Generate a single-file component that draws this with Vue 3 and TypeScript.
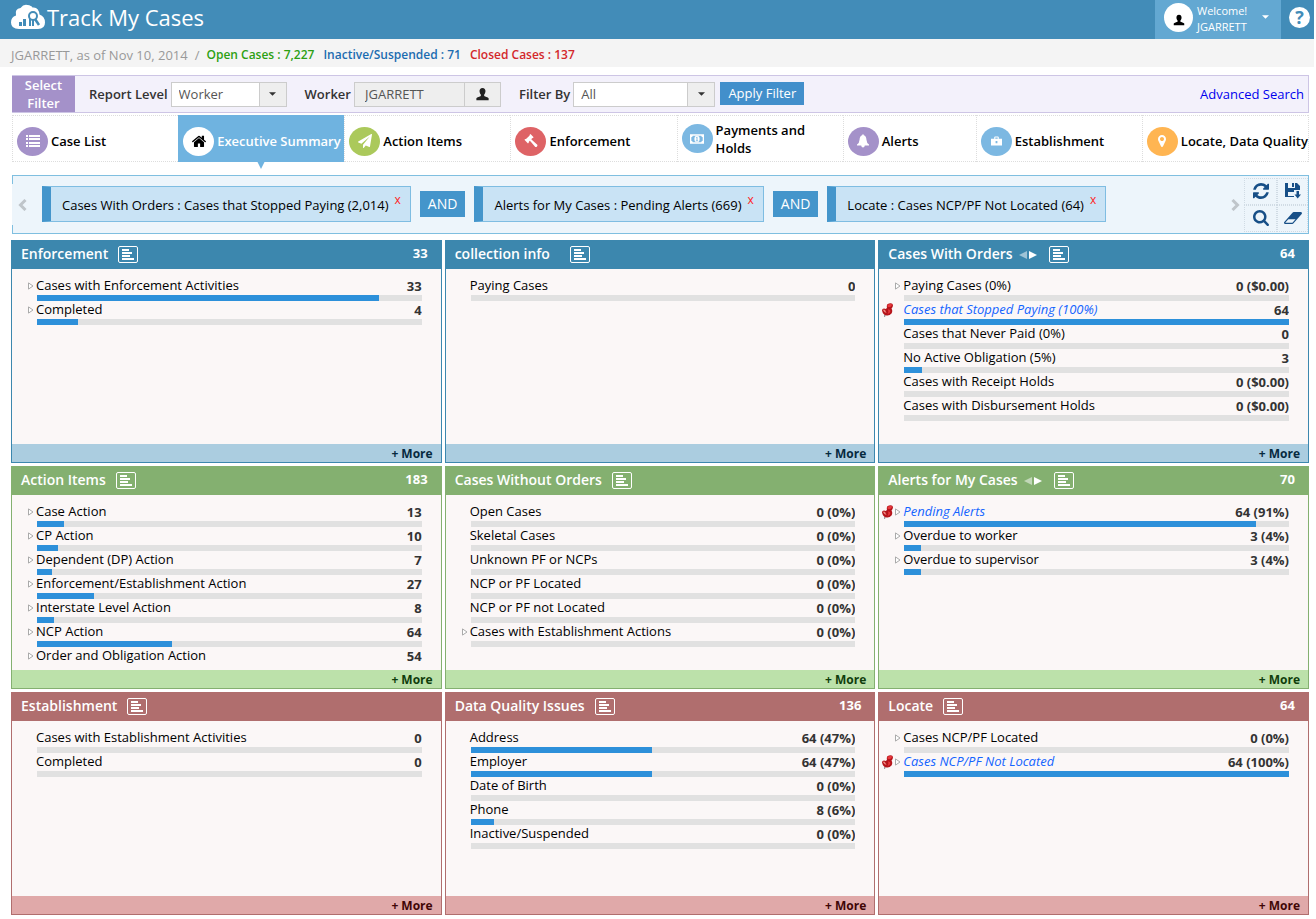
<script setup lang="ts">
import { ref } from 'vue'

type IconName =
  | 'list' | 'home' | 'plane' | 'gavel' | 'money' | 'bell' | 'case' | 'marker'

interface Tab { label: string; icon: IconName; tone: string; active?: boolean; wrap?: boolean }
interface Row {
  label: string
  value: string
  pct: number
  expand?: boolean
  pinned?: boolean
}
interface Panel {
  title: string
  tone: 'blue' | 'green' | 'red'
  total?: string
  pager?: boolean
  wide?: boolean
  rows: Row[]
}

const reportLevel = ref('Worker')
const worker = ref('JGARRETT')
const filterBy = ref('All')

const tabs: Tab[] = [
  { label: 'Case List', icon: 'list', tone: 'purple' },
  { label: 'Executive Summary', icon: 'home', tone: 'white', active: true },
  { label: 'Action Items', icon: 'plane', tone: 'lime' },
  { label: 'Enforcement', icon: 'gavel', tone: 'coral' },
  { label: 'Payments and Holds', icon: 'money', tone: 'sky', wrap: true },
  { label: 'Alerts', icon: 'bell', tone: 'purple' },
  { label: 'Establishment', icon: 'case', tone: 'sky' },
  { label: 'Locate, Data Quality', icon: 'marker', tone: 'amber' },
]

const chips = ref<string[]>([
  'Cases With Orders : Cases that Stopped Paying (2,014)',
  'Alerts for My Cases : Pending Alerts (669)',
  'Locate : Cases NCP/PF Not Located (64)',
])

const panels: Panel[] = [
  {
    title: 'Enforcement', tone: 'blue', total: '33',
    rows: [
      { label: 'Cases with Enforcement Activities', value: '33', pct: 89, expand: true },
      { label: 'Completed', value: '4', pct: 10.7, expand: true },
    ],
  },
  {
    title: 'collection info', tone: 'blue', wide: true,
    rows: [{ label: 'Paying Cases', value: '0', pct: 0 }],
  },
  {
    title: 'Cases With Orders', tone: 'blue', total: '64', pager: true,
    rows: [
      { label: 'Paying Cases (0%)', value: '0 ($0.00)', pct: 0, expand: true },
      { label: 'Cases that Stopped Paying (100%)', value: '64', pct: 100, pinned: true },
      { label: 'Cases that Never Paid (0%)', value: '0', pct: 0 },
      { label: 'No Active Obligation (5%)', value: '3', pct: 4.7 },
      { label: 'Cases with Receipt Holds', value: '0 ($0.00)', pct: 0 },
      { label: 'Cases with Disbursement Holds', value: '0 ($0.00)', pct: 0 },
    ],
  },
  {
    title: 'Action Items', tone: 'green', total: '183',
    rows: [
      { label: 'Case Action', value: '13', pct: 7, expand: true },
      { label: 'CP Action', value: '10', pct: 5.5, expand: true },
      { label: 'Dependent (DP) Action', value: '7', pct: 3.8, expand: true },
      { label: 'Enforcement/Establishment Action', value: '27', pct: 14.8, expand: true },
      { label: 'Interstate Level Action', value: '8', pct: 4.4, expand: true },
      { label: 'NCP Action', value: '64', pct: 35, expand: true },
      { label: 'Order and Obligation Action', value: '54', pct: 29.5, expand: true },
    ],
  },
  {
    title: 'Cases Without Orders', tone: 'green',
    rows: [
      { label: 'Open Cases', value: '0 (0%)', pct: 0 },
      { label: 'Skeletal Cases', value: '0 (0%)', pct: 0 },
      { label: 'Unknown PF or NCPs', value: '0 (0%)', pct: 0 },
      { label: 'NCP or PF Located', value: '0 (0%)', pct: 0 },
      { label: 'NCP or PF not Located', value: '0 (0%)', pct: 0 },
      { label: 'Cases with Establishment Actions', value: '0 (0%)', pct: 0, expand: true },
    ],
  },
  {
    title: 'Alerts for My Cases', tone: 'green', total: '70', pager: true,
    rows: [
      { label: 'Pending Alerts', value: '64 (91%)', pct: 91.4, expand: true, pinned: true },
      { label: 'Overdue to worker', value: '3 (4%)', pct: 4.4, expand: true },
      { label: 'Overdue to supervisor', value: '3 (4%)', pct: 4.4, expand: true },
    ],
  },
  {
    title: 'Establishment', tone: 'red',
    rows: [
      { label: 'Cases with Establishment Activities', value: '0', pct: 0 },
      { label: 'Completed', value: '0', pct: 0 },
    ],
  },
  {
    title: 'Data Quality Issues', tone: 'red', total: '136',
    rows: [
      { label: 'Address', value: '64 (47%)', pct: 47.2 },
      { label: 'Employer', value: '64 (47%)', pct: 47.2 },
      { label: 'Date of Birth', value: '0 (0%)', pct: 0 },
      { label: 'Phone', value: '8 (6%)', pct: 6 },
      { label: 'Inactive/Suspended', value: '0 (0%)', pct: 0 },
    ],
  },
  {
    title: 'Locate', tone: 'red', total: '64',
    rows: [
      { label: 'Cases NCP/PF Located', value: '0 (0%)', pct: 0, expand: true },
      { label: 'Cases NCP/PF Not Located', value: '64 (100%)', pct: 100, expand: true, pinned: true },
    ],
  },
]

function removeChip(index: number) {
  chips.value.splice(index, 1)
}
</script>

<template>
  <div class="page">
    <header class="topbar">
      <svg class="logo" viewBox="0 0 34 26" aria-hidden="true">
        <path fill="#fff" d="M8 25 Q0 25 0 18.500 Q0 13 5 11.500 Q3.500 4.500 9.500 4 Q12.500 0 16.500 1 Q20.500 1.500 21.500 3.500 Q27.500 2.500 28.500 10.500 Q34 12.500 34 18.500 Q34 25 27 25 Z" />
        <path fill="#428cb8" d="M8 18h3v4H8zM12 15h3v7h-3zM18 15h2v7h-2zM21 15h2v7h-2z" />
        <circle cx="22" cy="12" r="4" fill="#fff" stroke="#428cb8" stroke-width="2" />
        <path d="M24 15l4 6" stroke="#428cb8" stroke-width="2.500" />
      </svg>
      <h1>Track My Cases</h1>
      <button class="user" type="button">
        <span class="avatar">
          <svg viewBox="0 0 16 16" aria-hidden="true"><path d="M8 1c2.300 0 3.400 1.600 3.400 3.600 0 1.800-.7 3.200-1.500 4v1.600c1 .6 4.400 1.200 5.100 2.600V15H1v-2.200c.7-1.400 4.100-2 5.100-2.600V8.600c-.8-.8-1.500-2.200-1.500-4C4.600 2.600 5.700 1 8 1z" /></svg>
        </span>
        <span class="user-text"><span>Welcome!</span><span>JGARRETT</span></span>
        <svg class="user-caret" viewBox="0 0 8 4" aria-hidden="true"><path fill="#fff" d="M0 0h8L4 4z" /></svg>
      </button>
      <button class="help" type="button" aria-label="Help">?</button>
    </header>

    <div class="status">
      <span>JGARRETT, as of Nov 10, 2014</span>
      <span class="slash">/</span>
      <strong class="open">Open Cases : 7,227</strong>
      <strong class="inactive">Inactive/Suspended : 71</strong>
      <strong class="closed">Closed Cases : 137</strong>
    </div>

    <main>
      <form class="filter" @submit.prevent>
        <button class="select-filter" type="button">Select Filter</button>
        <label for="level">Report Level</label>
        <span class="drop level">
          <select id="level" v-model="reportLevel"><option>Worker</option></select>
          <span class="drop-btn"><svg viewBox="0 0 8 4" aria-hidden="true"><path d="M0 0h8L4 4z" /></svg></span>
        </span>
        <label for="worker">Worker</label>
        <span class="picker">
          <input id="worker" v-model="worker" type="text" readonly />
          <button type="button" aria-label="Choose worker">
            <svg viewBox="0 0 16 16" aria-hidden="true"><path d="M8 1c2.300 0 3.400 1.600 3.400 3.600 0 1.800-.7 3.200-1.500 4v1.600c1 .6 4.400 1.200 5.100 2.600V15H1v-2.200c.7-1.400 4.100-2 5.100-2.600V8.600c-.8-.8-1.500-2.200-1.500-4C4.600 2.600 5.700 1 8 1z" /></svg>
          </button>
        </span>
        <label for="by">Filter By</label>
        <span class="drop by">
          <select id="by" v-model="filterBy"><option>All</option></select>
          <span class="drop-btn"><svg viewBox="0 0 8 4" aria-hidden="true"><path d="M0 0h8L4 4z" /></svg></span>
        </span>
        <button class="apply" type="submit">Apply Filter</button>
        <a class="advanced" href="#advanced">Advanced Search</a>
      </form>

      <nav class="tabs">
        <a v-for="tab in tabs" :key="tab.label" href="#tab" class="tab" :class="{ active: tab.active, wrap: tab.wrap }">
          <span class="dot" :class="tab.tone">
            <svg v-if="tab.icon === 'list'" viewBox="0 0 14 12"><path d="M0 0h2v2H0zM3 0h11v2H3zM0 3h2v2H0zM3 3h11v2H3zM0 7h2v2H0zM3 7h11v2H3zM0 10h2v2H0zM3 10h11v2H3z" /></svg>
            <svg v-else-if="tab.icon === 'home'" viewBox="96 128 1600 1450"><path d="M1472 992v480q0 26-19 45t-45 19h-384v-384h-256v384h-384q-26 0-45-19t-19-45v-480q0-1 .5-3t.5-3l575-474 575 474q1 2 1 6zm223-69l-62 74q-8 9-21 11h-3q-13 0-21-7l-692-577-692 577q-12 8-24 7-13-2-21-11l-62-74q-8-10-7-23.500t11-21.500l719-599q32-26 76-26t76 26l244 204v-195q0-14 9-23t23-9h192q14 0 23 9t9 23v408l219 182q10 8 11 21.500t-7 23.500z" /></svg>
            <svg v-else-if="tab.icon === 'plane'" viewBox="0 0 1792 1792"><path d="M1764 11q33 24 27 64l-256 1536q-5 29-32 45-14 8-31 8-11 0-24-5l-453-185-242 295q-18 23-49 23-13 0-22-4-19-7-30.500-23.500t-11.500-36.500v-349l864-1059-1069 925-395-162q-37-14-40-55-2-40 32-59l1664-960q15-9 32-9 20 0 36 11z" /></svg>
            <svg v-else-if="tab.icon === 'gavel'" viewBox="0 0 14 14"><path d="M6.500 0 9.600 3.200 8.800 4.200 8.300 4 7.300 5.200 8.300 6.200 13.300 10.800Q13.800 11.500 13 12.400 12.200 13.500 11.300 12.900L6.800 7.700 5.800 6.800 4.700 7.900 4.900 8.500 4 9.400.4 5.800 1.400 4.900 2 5.100 5.700 1.400 5.500.9z" /></svg>
            <svg v-else-if="tab.icon === 'money'" viewBox="0 0 15 10"><path fill-rule="evenodd" d="M0 0h15v10H0zM3 1.500Q2.800 3 1.400 3.200V6.800Q2.800 7 3 8.500H12Q12.200 7 13.600 6.800V3.200Q12.200 3 12 1.500z" /><ellipse cx="7.500" cy="5" rx="2.800" ry="3.400" /><path fill="#7cb8e2" d="M6.500 3.200 7.400 2.500H8V6.500H8.700V7.300H6.300V6.500H7V3.600H6.500z" /></svg>
            <svg v-else-if="tab.icon === 'bell'" viewBox="0 0 14 14"><path d="M6.200 1.200Q6.200.2 7 .2T7.800 1.200Q10.300 1.900 10.400 5.500 10.600 9 13 10.600V11.600H8.800Q8.600 13.600 7 13.600T5.200 11.600H1V10.600Q3.400 9 3.600 5.500 3.700 1.900 6.200 1.200z" /></svg>
            <svg v-else-if="tab.icon === 'case'" class="small" viewBox="0 0 12 10"><path fill-rule="evenodd" d="M3.500 2.500V1Q3.500 0 4.500 0H7.500Q8.500 0 8.500 1V2.500H12V10H0V2.500zM4.700 2.500H7.300V1.200H4.700zM5 5V7.500H7V5z" /></svg>
            <svg v-else viewBox="256 0 1280 1792"><path d="M1152 640q0-106-75-181t-181-75-181 75-75 181 75 181 181 75 181-75 75-181zm256 0q0 109-33 179l-364 774q-16 33-47.500 52t-67.500 19-67.500-19-46.500-52l-365-774q-33-70-33-179 0-212 150-362t362-150 362 150 150 362z" /></svg>
          </span>
          <span class="tab-label">{{ tab.label }}</span>
        </a>
      </nav>

      <section class="crumbs">
        <button class="scroll" type="button" aria-label="Previous">
          <svg viewBox="0 0 9 12" aria-hidden="true"><path d="M7.500 1 2.500 6l5 5" /></svg>
        </button>
        <div class="chips">
          <template v-for="(chip, i) in chips" :key="chip">
            <span v-if="i > 0" class="and">AND</span>
            <span class="chip">
              <span>{{ chip }}</span>
              <button type="button" aria-label="Remove" @click="removeChip(i)">x</button>
            </span>
          </template>
        </div>
        <button class="scroll next" type="button" aria-label="Next">
          <svg viewBox="0 0 9 12" aria-hidden="true"><path d="M1.500 1l5 5-5 5" /></svg>
        </button>
        <div class="tools">
          <button type="button" aria-label="Refresh">
            <svg viewBox="128 128 1536 1536"><path d="M1639 1056q0 5-1 7-64 268-268 434.500t-478 166.500q-146 0-282.500-55t-243.500-157l-129 129q-19 19-45 19t-45-19-19-45v-448q0-26 19-45t45-19h448q26 0 45 19t19 45-19 45l-137 137q71 66 161 102t187 36q134 0 250-65t186-179q11-17 53-117 8-23 30-23h192q13 0 22.500 9.500t9.500 22.500zm25-800v448q0 26-19 45t-45 19h-448q-26 0-45-19t-19-45 19-45l138-138q-148-137-349-137-134 0-250 65t-186 179q-11 17-53 117-8 23-30 23h-199q-13 0-22.500-9.500t-9.500-22.500v-7q65-268 270-434.500t480-166.500q146 0 284 55.500t245 156.500l130-129q19-19 45-19t45 19 19 45z" /></svg>
          </button>
          <button type="button" aria-label="Save">
            <svg viewBox="0 0 16 16"><path fill-rule="evenodd" d="M0 0H3V5H10V0H12L15 3V7H9V9H3V13H9V14H0zM7 0H9V4H7zM11.500 8H14V11.500H16L12.700 15.500 9.500 11.500H11.500z" /></svg>
          </button>
          <button type="button" aria-label="Search">
            <svg viewBox="64 128 1664 1664"><path d="M1216 832q0-185-131.500-316.500t-316.500-131.500-316.500 131.500-131.500 316.500 131.500 316.500 316.500 131.500 316.500-131.500 131.500-316.500zm512 832q0 52-38 90t-90 38q-54 0-90-38l-343-342q-179 124-399 124-143 0-273.500-55.500t-225-150-150-225-55.500-273.500 55.500-273.500 150-225 225-150 273.500-55.500 273.500 55.500 225 150 150 225 55.500 273.500q0 220-124 399l343 343q37 37 37 90z" /></svg>
          </button>
          <button type="button" aria-label="Clear">
            <svg class="eraser" viewBox="-64 256 1920 1280"><path d="M832 1408l336-384h-768l-336 384h768zm1013-1077q15 34 9.500 71.500t-30.500 65.500l-896 1024q-38 44-96 44h-768q-38 0-69.500-20.500t-47.500-54.500q-15-34-9.500-71.500t30.500-65.500l896-1024q38-44 96-44h768q38 0 69.500 20.500t47.500 54.500z" /></svg>
          </button>
        </div>
      </section>

      <div class="grid">
        <section v-for="p in panels" :key="p.title" class="panel" :class="p.tone">
          <header class="head">
            <h2>{{ p.title }}</h2>
            <span v-if="p.pager" class="pager">
              <button type="button" aria-label="Previous" disabled><svg viewBox="0 0 8 8"><path d="M8 0v8L0 4z" /></svg></button>
              <button type="button" aria-label="Next"><svg viewBox="0 0 8 8"><path d="M0 0l8 4-8 4z" /></svg></button>
            </span>
            <button class="chart" :class="{ wide: p.wide }" type="button" aria-label="Chart">
              <svg viewBox="0 0 12 11"><path d="M0 0h7v2H0zM0 3h10v2H0zM0 6h8v2H0zM0 9h12v2H0z" /></svg>
            </button>
            <span class="total">{{ p.total }}</span>
          </header>
          <div class="body">
            <ul>
              <li v-for="row in p.rows" :key="row.label">
                <div class="marks">
                  <svg v-if="row.pinned" class="pin" viewBox="0 0 11 14" aria-hidden="true">
                    <path fill="#9a9a9a" d="M2 11.500h2L3 14H2z" />
                    <path fill="#b5141a" d="M0 7.500Q0 5.500 2 5.500L4 6 5 4.500Q4 1 7 .5 10.500-.5 11 2 11 4 9.500 5.500 11 8 9.500 10.500 7.500 13 4.500 12.500 1 12 0 7.500z" />
                    <path fill="#e8383c" d="M5.500 2Q7 .7 9.500 1 10.500 2 9 3.500 7 4.500 5.500 3.500zM6 6.500Q8 6 8.500 8 8 10.500 5.500 11 7 8.500 6 6.500z" />
                    <path fill="#f08a80" d="M1 7Q2 6 3 7.200 4 9 4.500 10 2 9.500 1 7z" />
                  </svg>
                  <button v-if="row.expand" class="expand" type="button" :aria-label="'Expand ' + row.label">
                    <svg viewBox="0 0 6 8"><path d="M.500.900v6.200L5 4z" /></svg>
                  </button>
                </div>
                <div class="line">
                  <span class="name" :class="{ pinned: row.pinned }">{{ row.label }}</span>
                  <strong>{{ row.value }}</strong>
                </div>
                <div class="bar"><div class="fill" :style="{ width: row.pct + '%' }"></div></div>
              </li>
            </ul>
          </div>
          <footer><a href="#more">+ More</a></footer>
        </section>
      </div>
    </main>
  </div>
</template>

<style>
body { background: #fff; }
</style>

<style scoped>
.page, .page * { box-sizing: border-box; }
.page {
  font: 13px/18px "Open Sans", "Noto Sans", sans-serif;
  color: #000;
}
button, input, select { font: inherit; color: inherit; margin: 0; padding: 0; border: 0; border-radius: 0; background: none; }
button { cursor: pointer; }
svg { display: block; fill: currentColor; }
h1, h2, ul { margin: 0; padding: 0; font-weight: 400; list-style: none; }
a { text-decoration: none; color: inherit; }

.topbar { display: flex; align-items: center; height: 39px; margin-right: 2px; padding-left: 11px; background: #428cb8; color: #fff; }
.logo { width: 34px; height: 26px; margin-bottom: 6px; }
h1 { margin: 0 0 6px 2px; font-size: 22px; line-height: 30px; }
.user { display: flex; align-items: center; height: 39px; width: 126px; margin-left: auto; padding-left: 9px; background: #63a8d2; text-align: left; }
.avatar { display: grid; place-items: center; width: 29px; height: 29px; margin-bottom: 4px; border-radius: 50%; background: #fff; color: #000; }
.avatar svg { width: 12px; height: 14px; margin-top: 4px; }
.user-text { display: flex; flex-direction: column; margin: 0 0 2px 4px; font-size: 11px; line-height: 16px; }
.user-caret { width: 7px; height: 4px; margin: 0 12px 6px auto; }
.help { width: 21px; height: 21px; margin: 0 4px 4px 8px; border-radius: 50%; background: #fff; color: #428cb8; font-size: 18px; line-height: 21px; font-weight: 700; }

.status { display: flex; align-items: center; height: 28px; margin-right: 2px; padding: 4px 0 0 11px; background: #f4f4f4; color: #999; }
.status .slash { margin: 0 7px; }
.status strong { margin-right: 9px; font-size: 12px; font-weight: 600; }
.status .open { color: #2ca012; }
.status .inactive { color: #1c6cb0; }
.status .closed { color: #d3272b; }

main { padding: 8px 7px 4px 11px; }
.filter { display: flex; align-items: center; height: 38px; margin-left: 1px; background: #f3f1fb; border: 1px solid #cdc5e5; border-left: 0; }
.select-filter { width: 63px; align-self: stretch; padding: 0 8px; background: #a491c9; color: #fff; font-weight: 600; }
.filter label { margin: 0 3px 0 18px; font-weight: 600; color: #333; }
.filter .select-filter + label { margin-left: 14px; }
.drop, .picker { display: flex; height: 25px; border: 1px solid #ccc; background: #fff; color: #555; }
.drop { position: relative; }
.level { width: 116px; }
.by { width: 142px; }
.drop select { flex: 1; appearance: none; padding: 0 28px 0 7px; outline: 0; }
.drop-btn { position: absolute; inset: 0 0 0 auto; display: grid; place-items: center; width: 27px; background: #eee; border-left: 1px solid #ccc; color: #333; pointer-events: none; }
.drop-btn svg { width: 7px; height: 4px; }
.picker { width: 147px; background: #eee; }
.picker input { flex: 1; min-width: 0; padding-left: 10px; outline: 0; }
.picker button { display: grid; place-items: center; width: 36px; border-left: 1px solid #ccc; color: #222; }
.picker svg { width: 15px; height: 14px; }
.apply { height: 23px; width: 84px; margin: 0 auto 2px 5px; background: #428fcb; color: #fff; }
.advanced { margin-right: 4px; color: #0000ee; }

.tabs { display: grid; grid-template-columns: repeat(5, minmax(0, 5fr)) minmax(0, 4fr) repeat(2, minmax(0, 5fr)); height: 47px; margin: 2px 0 0 1px; border-right: 1px dotted #ddd; }
.tab { position: relative; display: flex; align-items: center; padding: 5px 0 0 4px; font-weight: 600; border: 1px dotted #ddd; border-right: 0; white-space: nowrap; }
.tab-label { margin-left: 3px; }
.wrap { padding-top: 0; white-space: normal; }
.wrap .tab-label { max-width: 100px; }
.active { background: #6fb3e0; color: #fff; border-color: #6fb3e0; }
.active::after { content: ""; position: absolute; top: 100%; left: 50%; margin-left: -5px; border: 4px solid transparent; border-top: 8px solid #6fb3e0; border-bottom: 0; }
.dot { flex: none; display: grid; place-items: center; width: 31px; height: 29px; border-radius: 50%; color: #fff; }
.dot svg { width: 14px; height: 14px; }
.dot .small { width: 11px; height: 10px; }
.purple { background: #a491c9; }
.white { background: #fff; color: #000; }
.lime { background: #abc95b; }
.coral { background: #de6366; }
.sky { background: #7cb8e2; }
.amber { background: #ffb552; }

.crumbs { position: relative; display: flex; align-items: center; height: 59px; margin: 13px 0 0 1px; background: #edf5fb; border: 1px solid #7fbfe0; border-left: 0; }
.crumbs::before, .crumbs::after { content: ""; position: absolute; left: 0; width: 1px; height: 8px; background: #7fbfe0; }
.crumbs::before { top: 0; }
.crumbs::after { bottom: 0; }
.scroll { width: 20px; padding-left: 6px; }
.scroll.next { padding-left: 11px; }
.scroll svg { width: 9px; height: 12px; fill: none; stroke: #bfc5ca; stroke-width: 3; }
.chips { display: flex; align-items: center; flex: 1; gap: 9px; margin: 0 0 2px 10px; }
.chip { display: flex; align-items: center; height: 36px; padding: 2px 9px 0 11px; background: #c9e3f5; border: 1px solid #7fbde2; border-left: 9px solid #4495cb; white-space: nowrap; }
.chip button { margin: 0 0 10px 6px; color: #f22; font-size: 12px; line-height: 14px; }
.and { height: 26px; padding: 0 8px; background: #4495cb; color: #fff; line-height: 26px; font-size: 14px; }
.tools { display: grid; grid-template-columns: 33px 31px; grid-template-rows: 27px 27px; margin-left: 4px; color: #174f87; }
.tools button { display: grid; place-items: center; border: 1px dotted #d0dbe4; }
.tools svg { width: 16px; height: 16px; }
.tools .eraser { width: 18px; height: 12px; }

.grid { display: grid; grid-template-columns: repeat(3, minmax(0, 1fr)); gap: 3px; margin-top: 6px; }
.panel { background: #fbf7f7; border: 1px solid; border-top: 0; }
.head { display: flex; align-items: center; height: 29px; margin: 0 -1px; padding: 0 14px 2px 10px; color: #fff; }
h2 { font-size: 14px; line-height: 20px; font-weight: 600; }
.pager { display: flex; gap: 2px; margin: 2px 2px 0 6px; }
.pager svg { width: 8px; height: 8px; }
.pager button:disabled { opacity: 0.5; }
.chart { display: grid; place-items: center; width: 20px; height: 17px; margin: 1px 0 0 10px; border: 1px solid #fff; border-radius: 2px; }
.chart.wide { margin-left: 20px; }
.chart svg { width: 12px; height: 11px; }
.total { margin-left: auto; padding-bottom: 2px; font-weight: 700; }
.blue { border-color: #3c87ae; }
.blue .head { background: #3c87ae; }
.blue footer { background: #abcde0; color: #062a3f; }
.green { border-color: #84b070; }
.green .head { background: #84b070; }
.green footer { background: #bce1aa; color: #103d0c; }
.red { border-color: #b06e6e; }
.red .head { background: #b06e6e; }
.red footer { background: #e0a9a9; color: #400606; }
.body { height: 175px; padding: 8px 19px 5px 25px; }
ul { height: 162px; overflow: hidden; margin-left: -25px; padding-left: 25px; }
li { position: relative; }
.marks { position: absolute; right: 100%; top: 0; display: flex; align-items: center; justify-content: flex-end; height: 18px; margin-right: 3px; }
.pin { width: 11px; height: 14px; margin-right: 2px; }
.pin:last-child { margin-right: 8px; }
.expand svg { width: 6px; height: 8px; fill: #fff; stroke: #aaa; }
.line { display: flex; justify-content: space-between; height: 18px; margin-left: -1px; line-height: 16px; }
.line strong { padding-top: 1px; font-weight: 700; color: #333; }
.name.pinned { font-style: italic; color: #1464ff; }
.bar { height: 6px; background: #e1e1e1; }
.fill { height: 6px; background: #2d90da; }
footer { height: 18px; padding-right: 8px; text-align: right; font-size: 12px; line-height: 20px; font-weight: 700; }
</style>
